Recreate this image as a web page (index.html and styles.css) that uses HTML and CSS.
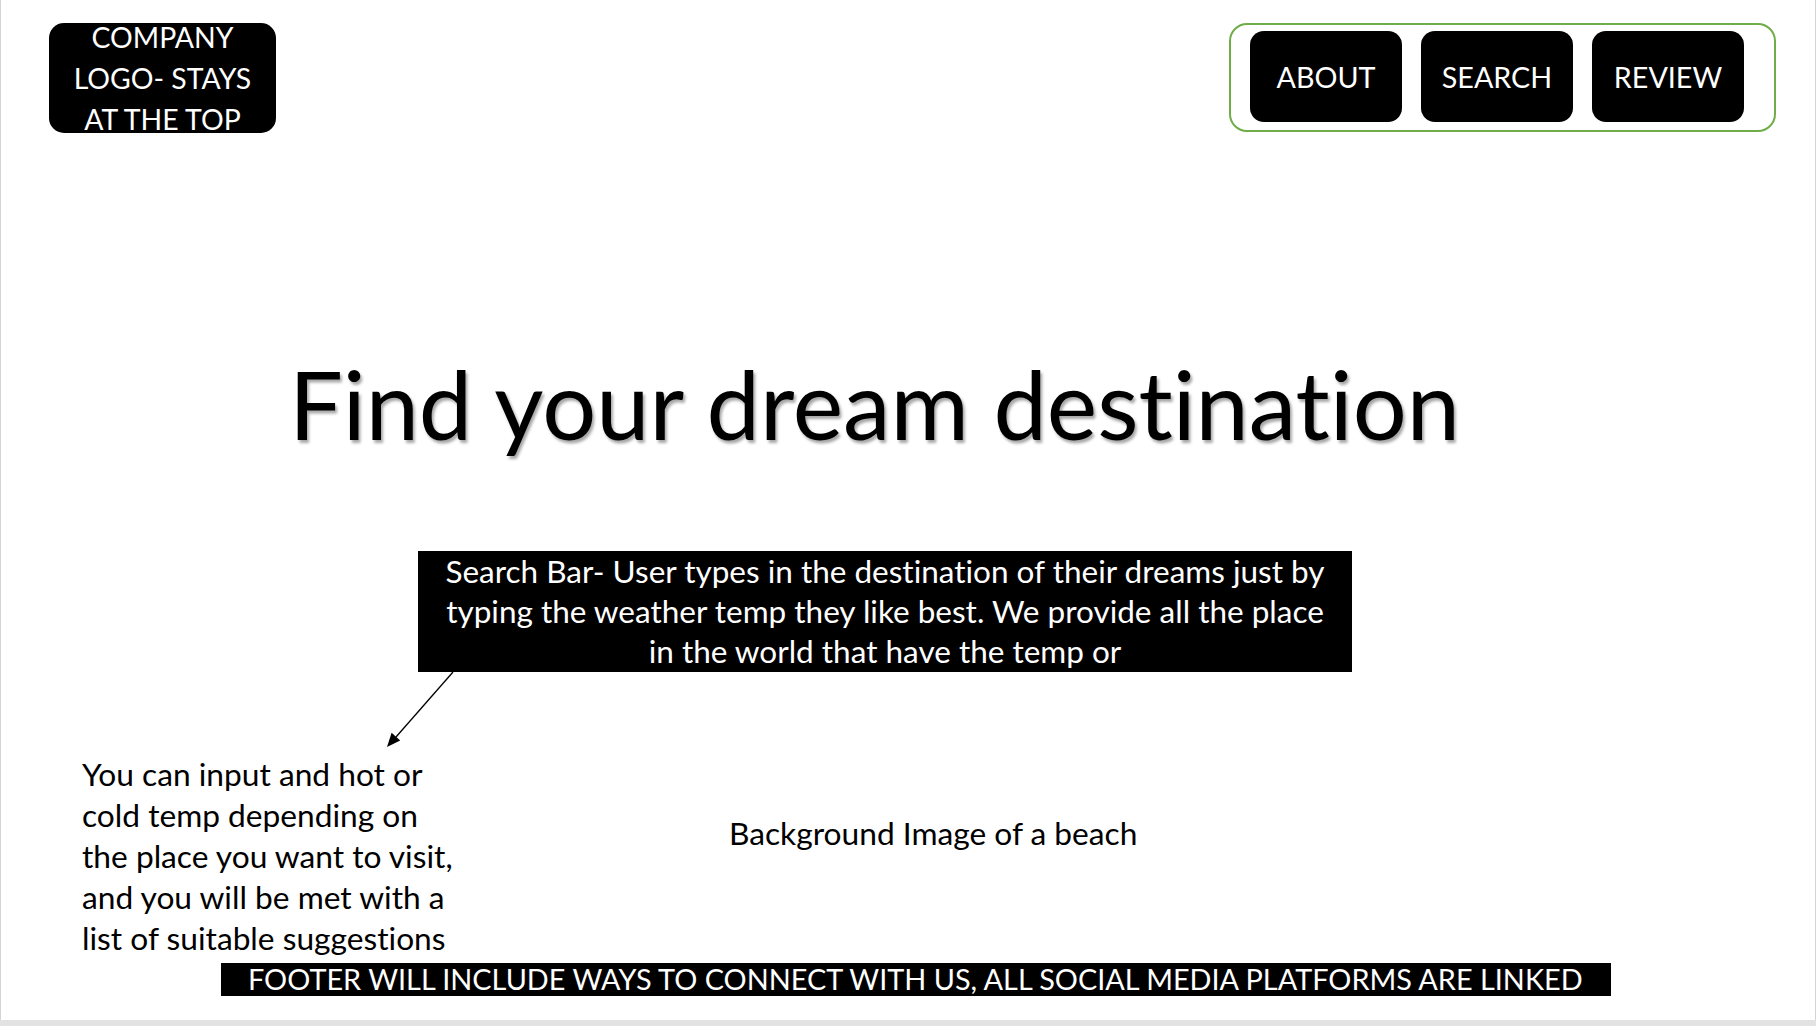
FILE: index.html
```html
<!DOCTYPE html>
<html lang="en">
<head>
<meta charset="utf-8">
<title>Find your dream destination</title>
<link rel="stylesheet" href="styles.css">
</head>
<body>
<div class="page">
  <div class="slide">
    <header class="top">
      <div class="logo">COMPANY<br>LOGO- STAYS<br>AT THE TOP</div>
      <nav class="nav">
        <a class="btn" href="#about">ABOUT</a>
        <a class="btn" href="#search">SEARCH</a>
        <a class="btn" href="#review">REVIEW</a>
      </nav>
    </header>

    <h1 class="title">Find your dream destination</h1>

    <div class="search">Search Bar- User types in the destination of their dreams just by<br>typing the weather temp they like best. We provide all the place<br>in the world that have the temp or</div>

    <svg class="arrow" width="80" height="84" viewBox="0 0 80 84" aria-hidden="true">
      <line x1="72" y1="4" x2="15" y2="69" stroke="#000" stroke-width="1.3"/>
      <polygon points="6,79 19.2,72.4 10.6,64.8" fill="#000"/>
    </svg>

    <div class="lower">
      <p class="note">You can input and hot or<br>cold temp depending on<br>the place you want to visit,<br>and you will be met with a<br>list of suitable suggestions</p>
      <p class="bg-note">Background Image of a beach</p>
    </div>

    <footer class="footer">
      <span class="footer-bar">FOOTER WILL INCLUDE WAYS TO CONNECT WITH US, ALL SOCIAL MEDIA PLATFORMS ARE LINKED</span>
    </footer>
  </div>
  <div class="statusbar"></div>
</div>
</body>
</html>
```

FILE: styles.css
```css
* { box-sizing: border-box; }

html, body {
  margin: 0;
  padding: 0;
}

body {
  width: 1816px;
  height: 1026px;
  overflow: hidden;
  background: #d4d4d4;
  font-family: "Lato", "Open Sans", "Liberation Sans", sans-serif;
  font-variant-ligatures: none;
  color: #000;
}

.page {
  display: flex;
  flex-direction: column;
  height: 1026px;
}

.slide {
  position: relative;
  height: 1020px;
  margin: 0 1px 0 1px;
  background: #fff;
  display: flex;
  flex-direction: column;
  align-items: flex-start;
}

.statusbar {
  height: 6px;
  background: #e2e2e2;
}

/* header */
.top {
  width: 100%;
  display: flex;
  justify-content: space-between;
  align-items: flex-start;
  padding: 23px 39px 0 48px;
}

.logo {
  width: 227px;
  height: 110px;
  background: #000;
  color: #fff;
  border-radius: 15px;
  display: flex;
  align-items: center;
  justify-content: center;
  text-align: center;
  font-size: 28.4px;
  line-height: 41px;
  white-space: nowrap;
}

.nav {
  width: 547px;
  height: 109px;
  border: 2px solid #70ad47;
  border-radius: 18px;
  display: flex;
  align-items: center;
  gap: 19px;
  padding: 0 29px 2px 19px;
}

.btn {
  width: 152px;
  height: 91px;
  background: #000;
  color: #fff;
  border-radius: 14px;
  display: flex;
  align-items: center;
  justify-content: center;
  font-size: 28.7px;
  text-decoration: none;
}

/* hero */
.title {
  margin: 215px 0 0 288px;
  font-size: 95.4px;
  line-height: 110px;
  font-weight: 400;
  white-space: nowrap;
  text-shadow: 2px 3px 3px rgba(0, 0, 0, 0.35);
}

.search {
  margin: 93px 0 0 417px;
  width: 934px;
  height: 121px;
  background: #000;
  color: #fff;
  text-align: center;
  font-size: 31.5px;
  line-height: 40px;
  white-space: nowrap;
}

.arrow {
  position: absolute;
  left: 380px;
  top: 668px;
}

.lower {
  margin-top: 82px;
  padding-left: 81px;
  display: grid;
  grid-template-columns: 647px auto;
  align-items: start;
}

.note,
.bg-note {
  margin: 0;
  font-size: 31.7px;
  line-height: 41px;
  white-space: nowrap;
}

.bg-note {
  margin-top: 59px;
}

.footer {
  margin: 4px 0 0 220px;
}

.footer-bar {
  display: inline-block;
  height: 33px;
  padding: 0 28px 0 27px;
  background: #000;
  color: #fff;
  font-size: 28.85px;
  line-height: 33px;
  white-space: nowrap;
}
```
